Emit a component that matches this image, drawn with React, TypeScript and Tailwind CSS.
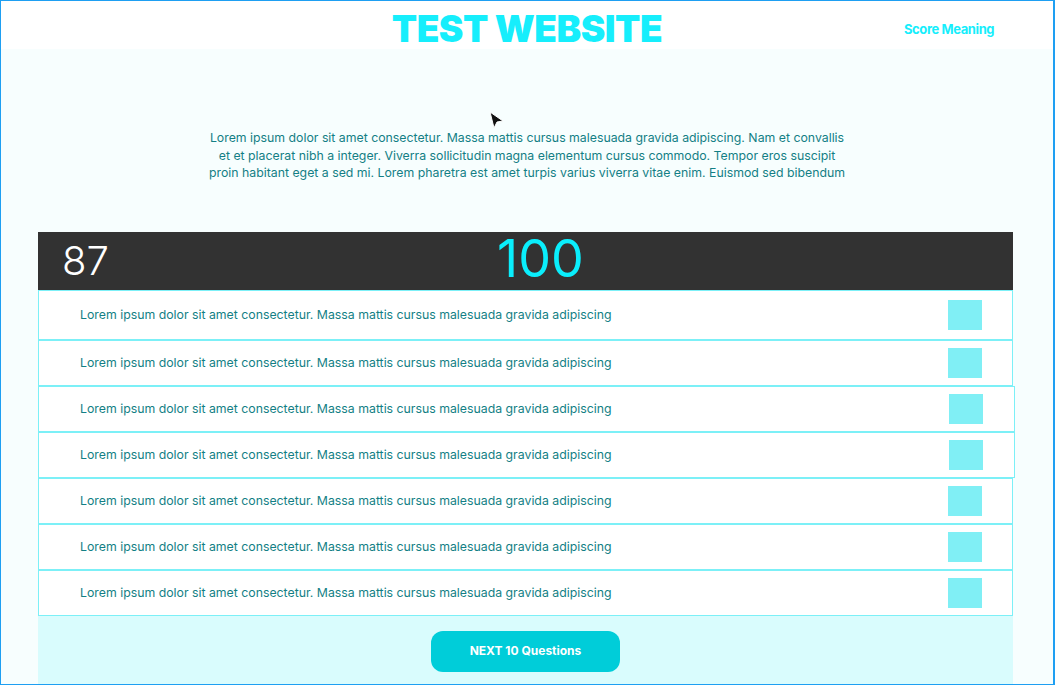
const lorem =
  'Lorem ipsum dolor sit amet consectetur. Massa mattis cursus malesuada gravida adipiscing'

const intro = [
  'Lorem ipsum dolor sit amet consectetur. Massa mattis cursus malesuada gravida adipiscing. Nam et convallis',
  'et et placerat nibh a integer. Viverra sollicitudin magna elementum cursus commodo. Tempor eros suscipit',
  'proin habitant eget a sed mi. Lorem pharetra est amet turpis varius viverra vitae enim. Euismod sed bibendum',
]

const rows = [
  { h: 'h-[50px]', wide: false },
  { h: 'h-[46px]', wide: false },
  { h: 'h-[46px]', wide: true },
  { h: 'h-[46px]', wide: true },
  { h: 'h-[46px]', wide: false },
  { h: 'h-[46px]', wide: false },
  { h: 'h-[46px]', wide: false },
]

function Cursor() {
  return (
    <svg className="absolute left-[487px] top-[110px]" width="18" height="20" viewBox="0 0 18 20">
      <path d="M2 1 L15 10 L9 11 L6 17 Z" fill="#111" stroke="#fff" strokeWidth="1" />
    </svg>
  )
}

function QuestionRow({ h, wide }: { h: string; wide: boolean }) {
  return (
    <div
      className={`flex items-center justify-between bg-white border border-[#7cf0f7] ${h} ${
        wide ? 'w-[977px]' : 'w-[975px]'
      }`}
    >
      <span className="pl-[41px] pt-[2px] text-[12.3px] text-[#137f85]">{lorem}</span>
      <div className={`w-[34px] h-[30px] bg-[#80eff5] ${wide ? 'mr-[31px]' : 'mr-[30px]'}`} />
    </div>
  )
}

export default function App() {
  return (
    <div
      className="relative w-[1055px] h-[685px] overflow-hidden border border-[#1e9ff2] border-r-2 bg-[#f7fefe]"
      style={{ fontFamily: 'Inter, "Noto Sans", sans-serif' }}
    >
      <header className="relative flex items-center justify-center h-[48px] bg-white">
        <h1 className="text-[37px] font-black tracking-[-0.5px] text-[#16eefc] leading-none mt-[6px]">
          TEST WEBSITE
        </h1>
        <a className="absolute left-[903px] top-[19px] text-[13px] font-bold tracking-[-0.4px] text-[#16eefc]">
          Score Meaning
        </a>
      </header>

      <div className="mt-[80px] flex flex-col items-center text-[12.3px] leading-[17.5px] text-[#137f85]">
        {intro.map((line, i) => (
          <p key={i} className="whitespace-nowrap">
            {line}
          </p>
        ))}
      </div>

      <section className="ml-[37px] mt-[50px] w-[975px]">
        <div className="relative flex items-center h-[58px] bg-[#323232]">
          <span className="pl-[24px] text-[40px] font-light text-white leading-none">87</span>
          <span className="absolute left-[459px] top-[1px] text-[52px] font-normal text-[#0aeefc] leading-none">100</span>
        </div>
        <div className="flex flex-col">
          {rows.map((r, i) => (
            <QuestionRow key={i} h={r.h} wide={r.wide} />
          ))}
        </div>
        <div className="flex justify-center h-[80px] bg-[#d9fcfd] pt-[15px]">
          <button className="w-[189px] h-[41px] rounded-[12px] bg-[#00cdd9] text-white text-[12px] font-bold">
            NEXT 10 Questions
          </button>
        </div>
      </section>

      <Cursor />
    </div>
  )
}
